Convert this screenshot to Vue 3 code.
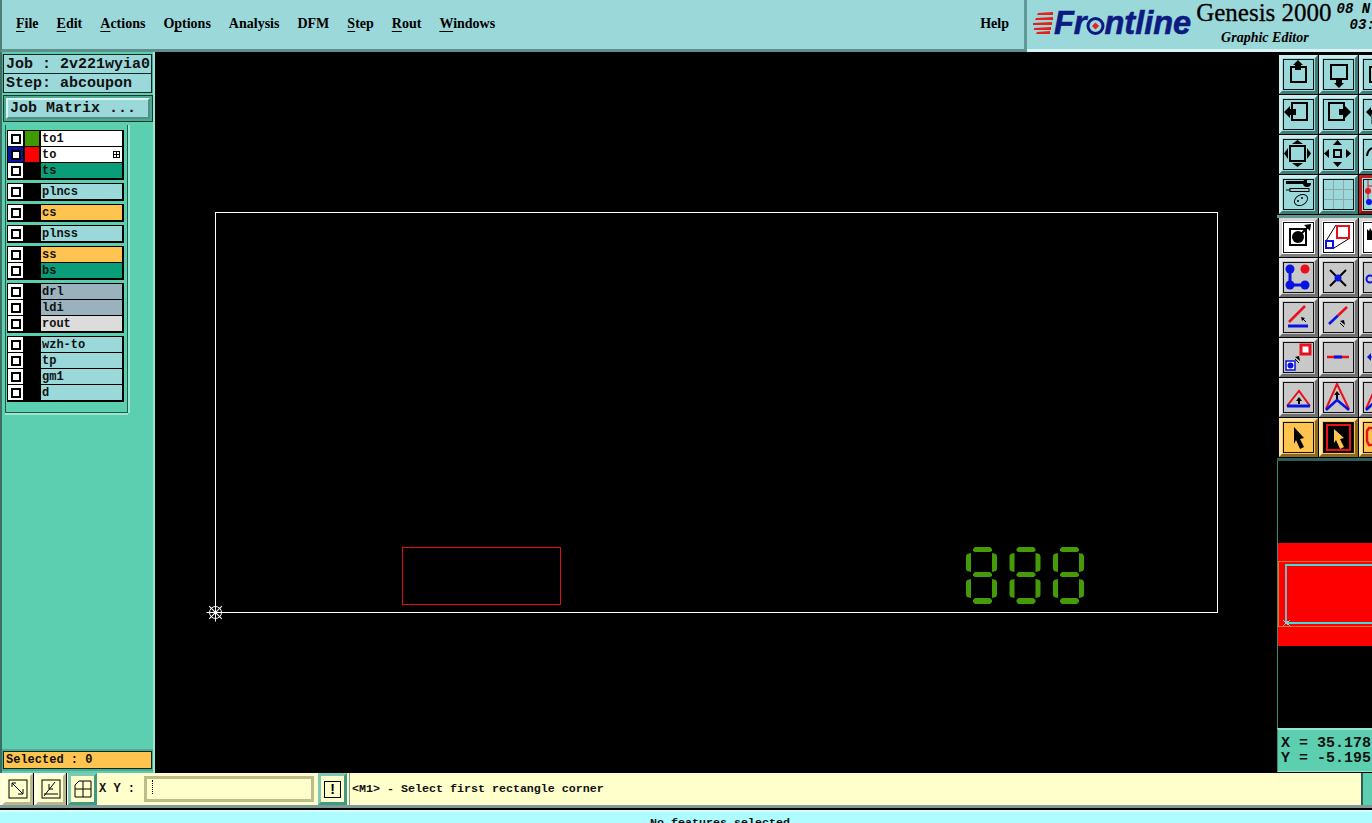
<script setup>
const menus = [
  { pre: '', key: 'F', post: 'ile' },
  { pre: '', key: 'E', post: 'dit' },
  { pre: '', key: 'A', post: 'ctions' },
  { pre: 'O', key: 'p', post: 'tions' },
  { pre: 'Analysis', key: '', post: '' },
  { pre: 'DFM', key: '', post: '' },
  { pre: '', key: 'S', post: 'tep' },
  { pre: '', key: 'R', post: 'out' },
  { pre: '', key: 'W', post: 'indows' },
]

const layerGroups = [
  [
    { name: 'to1', bg: '#ffffff', swatch: '#3f9a00' },
    { name: 'to', bg: '#ffffff', swatch: '#ff0000', active: true },
    { name: 'ts', bg: '#0a9e78' },
  ],
  [{ name: 'plncs', bg: '#9bd8da' }],
  [{ name: 'cs', bg: '#ffc44f' }],
  [{ name: 'plnss', bg: '#9bd8da' }],
  [
    { name: 'ss', bg: '#ffc44f' },
    { name: 'bs', bg: '#0a9e78' },
  ],
  [
    { name: 'drl', bg: '#9ab2bd' },
    { name: 'ldi', bg: '#9ab2bd' },
    { name: 'rout', bg: '#dcdcdc' },
  ],
  [
    { name: 'wzh-to', bg: '#9bd8da' },
    { name: 'tp', bg: '#9bd8da' },
    { name: 'gm1', bg: '#9bd8da' },
    { name: 'd', bg: '#9bd8da' },
  ],
]

const box = (x, y, s, h = s) =>
  `<rect x="${x}" y="${y}" width="${s}" height="${h}" fill="none" stroke="#000" stroke-width="2"/>`
const poly = (pts, fill = '#000') => `<polygon points="${pts}" fill="${fill}"/>`
const line = (x1, y1, x2, y2, color, w = 2) =>
  `<line x1="${x1}" y1="${y1}" x2="${x2}" y2="${y2}" stroke="${color}" stroke-width="${w}"/>`
const RED = '#e8101c'
const BLUE = '#0a14e0'
const upArrow = poly('14,0 19,5 17,5 17,10 11,10 11,5 9,5')
const cursor = poly('10,4 20,15 16,16 20,24 16,26 12,17 10,21')
const tiny = (x, y) => line(x, y, x + 4, y + 4, '#000', 1) + poly(`${x - 1},${y - 1} ${x + 3},${y} ${x},${y + 3}`)
const tinyUp = (x, y) => line(x + 5, y + 5, x + 1, y + 1, '#000', 1) + poly(`${x + 5},${y - 2} ${x + 6},${y + 3} ${x + 1},${y - 1}`)

const topTools = [
  [
    { icon: box(7, 7, 15) + upArrow },
    { icon: box(7, 5, 16, 14) + poly('15,28 20,23 18,23 18,18 12,18 12,23 10,23') },
    { icon: box(6, 7, 15) + upArrow },
  ],
  [
    { icon: box(8, 3, 15, 17) + poly('0,12 6,6 6,9 12,9 12,15 6,15 6,18') },
    { icon: box(5, 3, 15, 17) + poly('27,12 21,6 21,9 15,9 15,15 21,15 21,18') },
    { icon: poly('2,12 7,7 7,10 14,10 14,14 7,14 7,17') + line(9, 12, 9, 24, '#000', 3) },
  ],
  [
    {
      icon:
        box(6, 6, 15) +
        poly('13.5,0 19,4 8,4') +
        poly('13.5,27 19,23 8,23') +
        poly('0,13.5 4,8 4,19') +
        poly('27,13.5 23,8 23,19'),
    },
    {
      icon:
        box(10, 10, 7) +
        poly('13.5,0 18,5 9,5') +
        poly('13.5,27 18,22 9,22') +
        poly('0,13.5 5,9 5,18') +
        poly('27,13.5 22,9 22,18'),
    },
    { icon: '<path d="M3 16 Q4 8 10 8" fill="none" stroke="#000" stroke-width="2"/>' },
  ],
  [
    {
      icon:
        line(2, 2.5, 20, 2.5, '#000', 3) +
        '<circle cx="23" cy="3" r="4" fill="#000"/><rect x="23" y="0" width="6" height="3" fill="#9bd8da"/>' +
        '<rect x="6" y="8.5" width="19" height="3" fill="#9bd8da" stroke="#000"/>' +
        line(2, 10, 6, 10, '#000', 1) +
        '<ellipse cx="17" cy="20" rx="7" ry="5" transform="rotate(-30 17 20)" fill="none" stroke="#000"/>' +
        '<circle cx="14" cy="21" r="1" fill="#000"/><circle cx="18" cy="18" r="1" fill="#000"/>',
    },
    {
      icon:
        line(9.5, 0, 9.5, 29, '#8fa6aa', 1) +
        line(19.5, 0, 19.5, 29, '#8fa6aa', 1) +
        line(0, 9.5, 29, 9.5, '#8fa6aa', 1) +
        line(0, 19.5, 29, 19.5, '#8fa6aa', 1),
    },
    {
      tone: 'alert',
      icon:
        line(4, 0, 4, 24, RED, 1) +
        line(4, 6, 29, 6, RED, 1) +
        `<circle cx="4" cy="11" r="3" fill="${RED}"/><circle cx="5" cy="22" r="3" fill="${BLUE}"/>`,
    },
  ],
]

const editTools = [
  [
    {
      tone: 'white',
      icon:
        box(6, 6, 16) +
        '<circle cx="14" cy="14" r="6" fill="#000"/>' +
        line(17, 11, 24, 4, '#000', 2) +
        poly('27,1 26,8 20,2'),
    },
    {
      tone: 'white',
      icon:
        line(2, 18, 12, 2, '#000', 1) +
        line(10, 25, 26, 15, '#000', 1) +
        `<rect x="13" y="3" width="12" height="12" fill="#fff" stroke="${RED}" stroke-width="2"/>` +
        `<rect x="2" y="18" width="7" height="7" fill="#fff" stroke="${BLUE}" stroke-width="2"/>`,
    },
    { tone: 'white', icon: poly('3,17 3,6 5,8 6,5 8,8 9,5 11,8 12,6 12,17') },
  ],
  [
    {
      tone: 'grey',
      icon:
        `<path d="M6 6 V22 H21" fill="none" stroke="${BLUE}" stroke-width="3"/>` +
        `<circle cx="6" cy="6" r="4.5" fill="${BLUE}"/><circle cx="6" cy="22" r="4.5" fill="${BLUE}"/>` +
        `<circle cx="21" cy="22" r="4.5" fill="${BLUE}"/><circle cx="21" cy="6" r="4.5" fill="${RED}"/>`,
    },
    {
      tone: 'grey',
      icon:
        line(6, 7, 22, 23, '#000', 2) +
        line(22, 7, 6, 23, '#000', 2) +
        `<circle cx="14" cy="15" r="3.5" fill="${BLUE}"/>`,
    },
    { tone: 'grey', icon: `<circle cx="6" cy="16" r="3.5" fill="none" stroke="${BLUE}" stroke-width="2"/>` },
  ],
  [
    { tone: 'grey', icon: line(5, 19, 21, 3, RED, 2.5) + line(4, 23, 24, 23, BLUE, 3) + tiny(18, 15) },
    { tone: 'grey', icon: line(5, 21, 14, 12.5, BLUE, 2.5) + line(14, 12.5, 23, 4, RED, 2.5) + tinyUp(15, 19) },
    { tone: 'grey', icon: '' },
  ],
  [
    {
      tone: 'grey',
      icon:
        `<rect x="17" y="2" width="9" height="9" fill="#fff" stroke="${RED}" stroke-width="3"/>` +
        `<rect x="2" y="18" width="9" height="9" fill="#fff" stroke="${BLUE}" stroke-width="1.5"/>` +
        `<circle cx="6.5" cy="22.5" r="3" fill="${BLUE}"/>` +
        tinyUp(10, 15),
    },
    { tone: 'grey', icon: line(3, 14, 25, 14, RED, 2.5) + line(10, 14, 18, 14, BLUE, 3) },
    { tone: 'grey', icon: poly('3,14 7,10 7,18', BLUE) + line(6, 14, 14, 14, BLUE, 1) },
  ],
  [
    {
      tone: 'grey',
      icon:
        `<path d="M3 23 L15 8 L26 23" fill="none" stroke="${RED}" stroke-width="2"/>` +
        line(3, 23, 26, 23, BLUE, 3) +
        poly('15,14 18,18 16,18 16,21 14,21 14,18 12,18'),
    },
    {
      tone: 'grey',
      icon:
        `<path d="M2 26 L13 1 L25 26" fill="none" stroke="${RED}" stroke-width="2"/>` +
        `<path d="M2 27 L13 17 L25 27" fill="none" stroke="${BLUE}" stroke-width="2.5"/>` +
        poly('13,8 16,12 14,12 14,16 12,16 12,12 10,12'),
    },
    {
      tone: 'grey',
      icon:
        `<path d="M2 26 L13 1 L25 26" fill="none" stroke="${RED}" stroke-width="2"/>` +
        `<path d="M2 27 L13 17 L25 27" fill="none" stroke="${BLUE}" stroke-width="2.5"/>`,
    },
  ],
  [
    { tone: 'yellow', icon: cursor },
    {
      tone: 'yellow',
      on: true,
      icon:
        '<rect x="0" y="0" width="29" height="29" fill="#000"/>' +
        `<rect x="3" y="2" width="23" height="25" fill="none" stroke="${RED}" stroke-width="2"/>` +
        poly('10,6 20,15 16,16 20,24 16,26 12,17 10,20', '#ffc44f'),
    },
    {
      tone: 'yellow',
      icon: `<path d="M8 5 H5 L3 8 V18 L5 22 H8" fill="none" stroke="${RED}" stroke-width="2.5"/>`,
    },
  ],
]

const spokes = [0, 45, 90, 135]
const digits = [966, 1009.5, 1053]
</script>

<template>
  <div class="screen">
    <header class="titlebar">
      <nav class="menubar">
        <div class="menus">
          <span v-for="m in menus" :key="m.pre + m.key + m.post" class="menu">{{ m.pre }}<u>{{ m.key }}</u>{{ m.post }}</span>
        </div>
        <span class="menu help">Help</span>
      </nav>
      <div class="brand">
        <div class="logo">
          <svg class="speed" width="20" height="22" viewBox="0 0 20 22">
            <polygon points="5,1 20,0 20,3 4,3" fill="#e8201c" />
            <polygon points="3,6 20,5 20,8 2,8" fill="#e8201c" />
            <polygon points="0,11 19,10 19,13 0,13" fill="#e8201c" />
            <polygon points="1,16 18,15 18,18 1,18" fill="#e8201c" />
            <polygon points="4,20 17,19 17,22 3,22" fill="#e8201c" />
          </svg>
          <span class="logo-text">Fr</span>
          <svg class="logo-o" width="19" height="20" viewBox="0 0 19 20">
            <circle cx="9.5" cy="10" r="7.5" fill="none" stroke="#0c1a82" stroke-width="3" />
            <polygon points="9.5,6.5 13,10 9.5,13.5 6,10" fill="#e8201c" />
          </svg>
          <span class="logo-text">ntline</span>
        </div>
        <div class="product">
          <span class="product-name">Genesis 2000</span>
          <span class="product-sub">Graphic Editor</span>
        </div>
        <div class="stamp">
          <span>08 N</span>
          <span class="stamp-time">03:</span>
        </div>
      </div>
    </header>

    <main class="workspace">
      <aside class="side">
        <div class="job-block">
          <div class="job-line">Job : 2v221wyia0</div>
          <div class="job-line step">Step: abcoupon</div>
        </div>
        <div class="matrix-block">
          <button class="matrix-btn">Job Matrix ...</button>
        </div>
        <div class="layers">
          <div v-for="(group, i) in layerGroups" :key="i" class="layer-group">
            <div v-for="layer in group" :key="layer.name" class="layer-row">
              <span class="check" :class="{ active: layer.active }"><i /></span>
              <span class="swatch" :style="{ background: layer.swatch || '#000' }" />
              <span class="layer-name" :style="{ background: layer.bg }">
                {{ layer.name }}
                <svg v-if="layer.active" class="layer-mark" width="7" height="7" viewBox="0 0 7 7">
                  <rect x="0.5" y="0.5" width="6" height="6" fill="none" stroke="#000" />
                  <path d="M3.5 0 V7 M0 3.5 H7" stroke="#000" />
                </svg>
              </span>
            </div>
          </div>
        </div>
        <div class="side-fill" />
        <div class="selected-block">
          <div class="selected">Selected : 0</div>
        </div>
      </aside>

      <svg class="canvas" width="1122" height="721" viewBox="155 52 1122 721">
        <rect x="215.5" y="212.5" width="1002" height="400" fill="none" stroke="#fff" />
        <rect x="402.5" y="547.5" width="158" height="57" fill="none" stroke="#e01010" />
        <g v-for="x in digits" :key="x" fill="#459a08" :transform="`translate(${x} 547)`">
          <polygon points="7,2 9,0 24,0 26,2 26,4 24,5 9,5 7,4" />
          <polygon points="7,27 9,25 24,25 26,27 26,29 24,30 9,30 7,29" />
          <polygon points="7,53 9,51 24,51 26,53 26,55 24,57 9,57 7,55" />
          <polygon points="1,7 5,6 5,25 1,24 0,22 0,9" />
          <polygon points="1,33 5,32 5,51 1,50 0,48 0,35" />
          <polygon points="26,6 30,7 31,9 31,22 30,24 26,25" />
          <polygon points="26,32 30,33 31,35 31,48 30,50 26,51" />
        </g>
        <g stroke="#fff" fill="none">
          <circle cx="215.5" cy="612.5" r="6" />
          <line
            v-for="a in spokes"
            :key="a"
            x1="206.5"
            y1="612.5"
            x2="224.5"
            y2="612.5"
            :transform="`rotate(${a} 215.5 612.5)`"
          />
        </g>
      </svg>

      <aside class="tools">
        <div class="tool-group first">
          <div v-for="(row, r) in topTools" :key="r" class="tool-row">
            <div v-for="(tool, c) in row" :key="c" class="tool" :class="tool.tone">
              <svg class="tool-icon" width="29" height="29" viewBox="0 0 29 29" v-html="tool.icon" />
            </div>
          </div>
        </div>
        <div class="tool-group second">
          <div v-for="(row, r) in editTools" :key="r" class="tool-row">
            <div v-for="(tool, c) in row" :key="c" class="tool" :class="[tool.tone, { on: tool.on }]">
              <svg class="tool-icon" width="29" height="29" viewBox="0 0 29 29" v-html="tool.icon" />
            </div>
          </div>
        </div>
        <svg class="preview" width="95" height="267" viewBox="1277 461 95 267" shape-rendering="crispEdges">
          <line x1="1277.5" y1="461" x2="1277.5" y2="728" stroke="#3f8a70" />
          <rect x="1278" y="543" width="94" height="103" fill="#ff0000" />
          <rect x="1278.5" y="561.5" width="94" height="65" fill="none" stroke="#d87a20" />
          <rect x="1285" y="565" width="2" height="58" fill="#7fb0c0" />
          <rect x="1285" y="564" width="87" height="2" fill="#40dcdc" />
          <rect x="1285" y="622" width="87" height="2" fill="#40dcdc" />
          <path d="M1283 620 L1290 626 M1290 620 L1283 626" stroke="#7fd8d8" />
        </svg>
        <div class="coords">
          <span>X = 35.178</span>
          <span>Y = -5.195</span>
        </div>
      </aside>
    </main>

    <footer class="cmdbar">
      <div class="cmd-btn pale">
        <svg width="20" height="20" viewBox="0 0 20 20">
          <rect x="1" y="1" width="18" height="18" fill="none" stroke="#000" />
          <path d="M4 4 L15 15 M15 10 V15 H10 M4 4 H8 M4 4 V8" fill="none" stroke="#000" />
        </svg>
      </div>
      <div class="cmd-btn pale">
        <svg width="20" height="20" viewBox="0 0 20 20">
          <rect x="1" y="1" width="18" height="18" fill="none" stroke="#000" />
          <path d="M3 17 L14 3 M3 15 H17 M8 5 V10 H12" fill="none" stroke="#000" />
        </svg>
      </div>
      <div class="cmd-btn teal">
        <svg width="18" height="18" viewBox="0 0 18 18">
          <path d="M5 1 H17 V17 H1 V5 Z M9 1 V17 M1 9 H17" fill="none" stroke="#000" />
        </svg>
      </div>
      <span class="xy-label">X Y :</span>
      <div class="xy-input"><i class="caret" /></div>
      <div class="cmd-btn teal bang"><span class="bang-box">!</span></div>
      <div class="message">&lt;M1&gt; - Select first rectangle corner</div>
      <div class="cmd-end" />
    </footer>

    <div class="status">
      <span class="status-text">No features selected</span>
    </div>
  </div>
</template>

<style>
html,
body {
  margin: 0;
  background: #000;
  overflow: hidden;
}
</style>

<style scoped>
.screen {
  width: 1372px;
  height: 823px;
  overflow: hidden;
  display: flex;
  flex-direction: column;
  background: #000;
  font-family: "Liberation Mono", monospace;
}

.titlebar {
  height: 52px;
  flex: none;
  display: flex;
  background: #9bd8da;
}

.menubar {
  width: 1027px;
  box-sizing: border-box;
  display: flex;
  align-items: center;
  justify-content: space-between;
  padding: 0 15px 1px 14px;
  border-left: 2px solid #4f7f78;
  border-right: 3px solid #5f9a98;
  border-bottom: 3px solid #5f8f8c;
}

.menus {
  display: flex;
  gap: 18px;
}

.menu {
  font: bold 14px "Liberation Serif", serif;
  color: #000;
}

.menu u {
  text-underline-offset: 3px;
}

.brand {
  flex: 1;
  min-width: 0;
  display: flex;
  align-items: flex-start;
  overflow: hidden;
  border-bottom: 3px solid #d8f4f4;
}

.logo {
  flex: none;
  display: flex;
  align-items: center;
  height: 46px;
  margin-left: 6px;
  color: #0c1a82;
}

.speed {
  margin-right: 1px;
}

.logo-text {
  font: italic bold 32.5px "Liberation Sans", sans-serif;
  -webkit-text-stroke: 0.6px #0c1a82;
}

.logo-o {
  margin: 5px 0 0 -1px;
}

.product {
  flex: none;
  display: flex;
  flex-direction: column;
  align-items: center;
  margin-left: 5px;
  color: #000;
  white-space: nowrap;
}

.product-name {
  font: 25px/25px "Liberation Serif", serif;
  -webkit-text-stroke: 0.3px #000;
}

.product-sub {
  font: italic bold 14px/16px "Liberation Serif", serif;
  margin: 5px 0 0 2px;
}

.stamp {
  flex: none;
  display: flex;
  flex-direction: column;
  margin: 1px 0 0 5px;
  font: italic bold 14px/16px "Liberation Mono", monospace;
  white-space: nowrap;
}

.stamp-time {
  margin-left: 13px;
}

.workspace {
  height: 721px;
  flex: none;
  display: flex;
}

.side {
  width: 155px;
  flex: none;
  box-sizing: border-box;
  display: flex;
  flex-direction: column;
  background: #5ccfb0;
  border-left: 2px solid #3a6f62;
  border-right: 2px solid #9be6d2;
}

.job-block {
  margin-top: 2px;
  padding: 0 1px;
  background: #4fa88f;
  display: flex;
  flex-direction: column;
}

.job-line {
  height: 20px;
  box-sizing: border-box;
  border: 1px solid #0c2a24;
  background: #9bd8da;
  padding-left: 2px;
  font-size: 15px;
  line-height: 19px;
  font-weight: bold;
  color: #111;
  white-space: pre;
}

.job-line.step {
  height: 19px;
  border-top: 0;
}

.matrix-block {
  padding: 2px;
  background: #4fa88f;
  border: 1px solid #123c32;
  margin: 2px 0 0 1px;
}

.matrix-btn {
  display: block;
  width: 100%;
  height: 21px;
  padding: 1px 0 0 2px;
  box-sizing: border-box;
  text-align: left;
  background: #9bd8da;
  border: 2px solid;
  border-color: #d8f4f4 #4f8f88 #4f8f88 #d8f4f4;
  font: bold 15px/16px "Liberation Mono", monospace;
  color: #111;
}

.layers {
  margin: 3px 0 0 3px;
  width: 123px;
  height: 288px;
  box-sizing: border-box;
  padding: 5px 3px 0 1px;
  display: flex;
  flex-direction: column;
  gap: 3px;
  border: 1px solid #245a4c;
  border-top: 0;
  background: #5ccfb0;
  box-shadow: 2px 0 0 #9be6d2, 0 2px 0 #9be6d2;
}

.layer-group {
  border: solid #000;
  border-width: 1px 2px 1px 1px;
  background: #000;
}

.layer-row {
  height: 16px;
  display: flex;
}

.check {
  width: 15px;
  height: 15px;
  flex: none;
  box-sizing: border-box;
  background: #fff;
  display: flex;
  align-items: center;
  justify-content: center;
}

.check.active {
  background: #0a14a0;
}

.check i {
  display: block;
  width: 6px;
  height: 6px;
  border: 2px solid #000;
  background: #fff;
}

.swatch {
  width: 14px;
  height: 15px;
  flex: none;
  margin: 0 2px;
}

.layer-name {
  flex: 1;
  height: 15px;
  display: flex;
  align-items: center;
  justify-content: space-between;
  padding: 0 2px 0 1px;
  box-sizing: border-box;
  font-size: 12px;
  font-weight: bold;
  color: #111;
}

.layer-mark {
  flex: none;
}

.side-fill {
  flex: 1;
}

.selected-block {
  margin: 0 0 2px 0;
  padding: 2px 1px;
  background: #4fa88f;
}

.selected {
  height: 18px;
  box-sizing: border-box;
  border: 1px solid #0c2a24;
  background: #ffc44f;
  padding-left: 2px;
  font-size: 12px;
  line-height: 16px;
  font-weight: bold;
  color: #111;
}

.canvas {
  flex: none;
  display: block;
  background: #000;
}

.tools {
  width: 95px;
  flex: none;
  display: flex;
  flex-direction: column;
  overflow: hidden;
  background: #000;
}

.tool-group {
  display: flex;
  flex-direction: column;
  padding-left: 2px;
}

.tool-group.first {
  padding-top: 3px;
  background: #000;
  border-bottom: 3px solid #5f9a8c;
}

.tool-group.second {
  border-bottom: 3px solid #2f5f54;
}

.tool-row {
  display: flex;
  height: 40px;
}

.tool {
  width: 39px;
  height: 39px;
  margin-right: 1px;
  flex: none;
  box-sizing: border-box;
  background: #9bd8da;
  border: 3px solid;
  border-color: #c8eeee #3f7a78 #3f7a78 #c8eeee;
  display: flex;
  align-items: center;
  justify-content: center;
}

.tool.white {
  background: #fff;
  border-color: #d8d8d8 #808080 #808080 #d8d8d8;
}

.tool.grey {
  background: #c8c8c8;
  border-color: #e8e8e8 #707070 #707070 #e8e8e8;
}

.tool.yellow {
  background: #ffc44f;
  border-color: #ffe6a8 #8a6a20 #8a6a20 #ffe6a8;
}

.tool.alert {
  background: #9bd8da;
  border-color: #c02020 #801010 #801010 #c02020;
}

.tool-icon {
  flex: none;
  overflow: visible;
  outline: 1px solid #111;
}

.preview {
  flex: none;
  display: block;
}

.coords {
  height: 44px;
  flex: none;
  box-sizing: border-box;
  display: flex;
  flex-direction: column;
  justify-content: center;
  padding-left: 3px;
  background: #5ccfb0;
  border-top: 2px solid #9be6d2;
  border-left: 1px solid #3f8a70;
  border-bottom: 1px solid #9be6d2;
  font-size: 15px;
  line-height: 15px;
  font-weight: bold;
  color: #111;
  white-space: pre;
}

.cmdbar {
  height: 32px;
  flex: none;
  display: flex;
  align-items: stretch;
  padding: 0 0 0 2px;
  background: #ffffcc;
  border-bottom: 3px solid #7f9a94;
}

.cmd-btn {
  width: 31px;
  flex: none;
  box-sizing: border-box;
  display: flex;
  align-items: center;
  justify-content: center;
  border: 3px solid;
}

.cmd-btn.pale {
  margin-right: 2px;
  background: #ffffcc;
  border-color: #fffff0 #b8b890 #b8b890 #fffff0;
  box-shadow: 1px 0 0 #000;
}

.cmd-btn.teal {
  width: 29px;
  background: #ffffcc;
  border-color: #7fc8b4 #3f9a84 #3f9a84 #7fc8b4;
}

.xy-label {
  width: 47px;
  flex: none;
  box-sizing: border-box;
  padding: 8px 0 0 2px;
  font-size: 12px;
  line-height: 16px;
  font-weight: bold;
  color: #111;
}

.xy-input {
  width: 170px;
  flex: none;
  box-sizing: border-box;
  margin: 3px 4px 3px 0;
  padding: 1px 0 0 5px;
  background: #ffffcc;
  border: 3px solid #bdbd8c;
}

.caret {
  display: block;
  width: 1px;
  height: 14px;
  border-left: 1px dotted #000;
}

.bang {
  margin-right: 2px;
}

.bang-box {
  width: 17px;
  height: 17px;
  box-sizing: border-box;
  border: 1px solid #000;
  display: flex;
  align-items: center;
  justify-content: center;
  font: bold 14px "Liberation Sans", sans-serif;
  color: #000;
}

.message {
  flex: 1;
  padding: 8px 0 0 2px;
  border-left: 1px solid #7f9a94;
  font-size: 11.67px;
  line-height: 16px;
  font-weight: bold;
  color: #111;
  white-space: pre;
}

.cmd-end {
  width: 11px;
  flex: none;
  box-sizing: border-box;
  background: #5ccfb0;
  border-left: 2px solid #2f5f54;
}

.status {
  flex: 1;
  min-height: 0;
  box-sizing: border-box;
  padding-left: 68px;
  background: #aefcff;
  border-top: 2px solid #000;
  text-align: center;
  box-shadow: inset 0 2px 0 #d8ffff;
  overflow: hidden;
}

.status-text {
  display: block;
  padding-top: 6px;
  font-size: 11.67px;
  line-height: 14px;
  font-weight: bold;
  color: #111;
}
</style>
